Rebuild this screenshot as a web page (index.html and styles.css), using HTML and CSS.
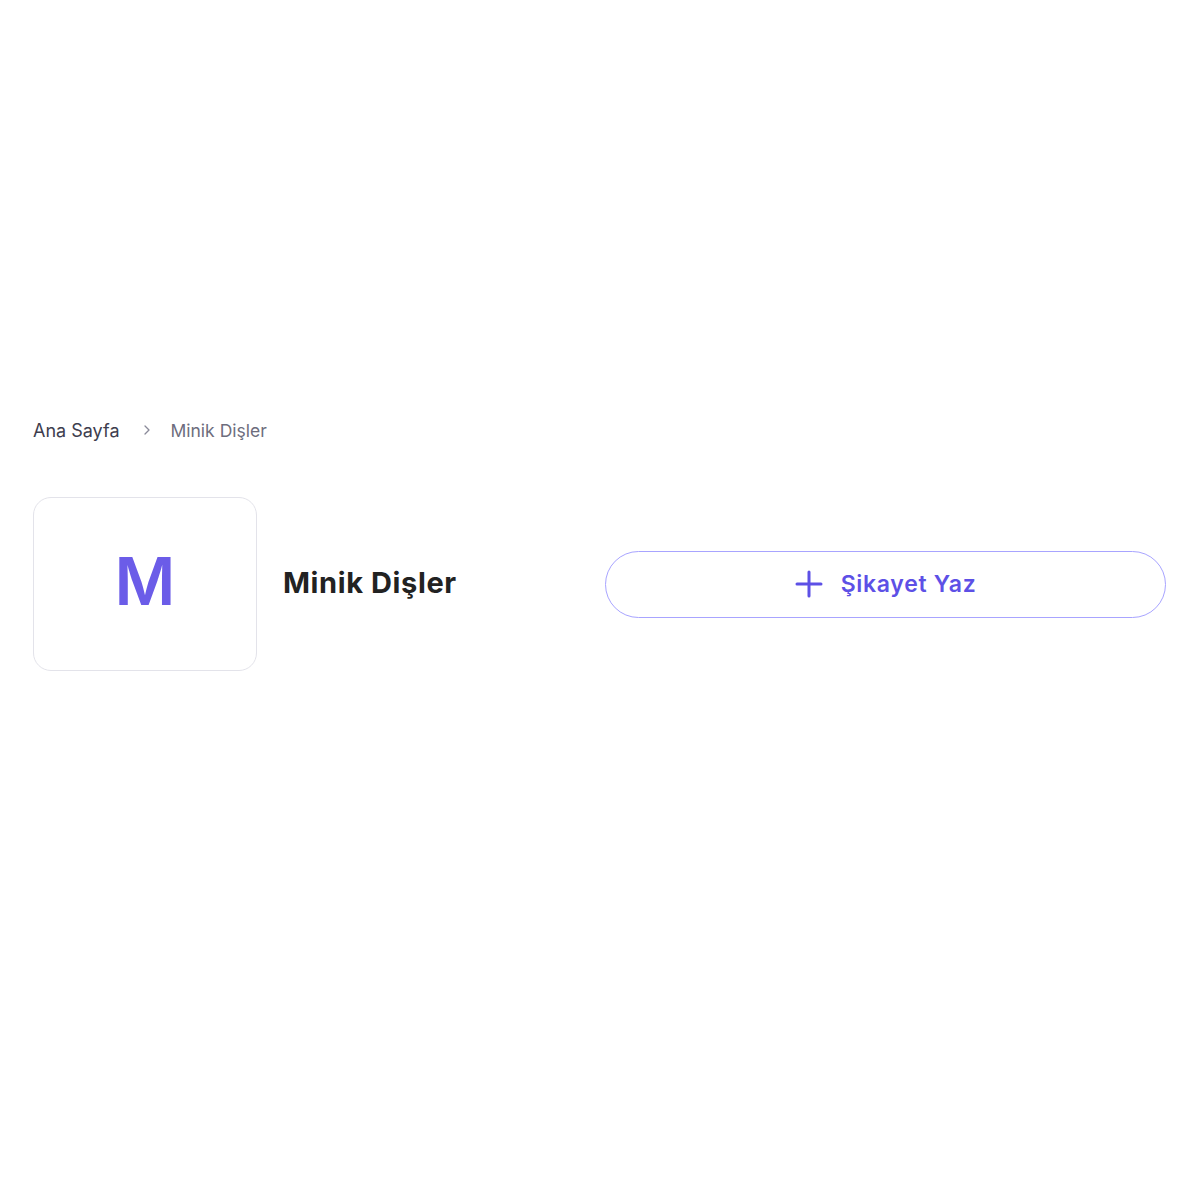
FILE: index.html
```html
<!DOCTYPE html>
<html lang="tr">
<head>
    <meta charset="UTF-8">
    <meta name="viewport" content="width=device-width, initial-scale=1.0">
    <title>Minik Dişler</title>
    <link rel="stylesheet" href="styles.css">
</head>
<body>
    <div class="page">
        <nav class="breadcrumb">
            <a href="#">Ana Sayfa</a>
            <svg class="sep" width="10" height="12" viewBox="0 0 10 12" fill="none">
                <path d="M3 2l4 4-4 4" stroke="currentColor" stroke-width="1.3" stroke-linecap="round" stroke-linejoin="round"/>
            </svg>
            <span class="current">Minik Dişler</span>
        </nav>

        <div class="brand-head">
            <div class="brand-info">
                <div class="logo-box">M</div>
                <h1>Minik Dişler</h1>
            </div>
            <button class="write-btn" type="button">
                <svg width="28" height="28" viewBox="0 0 28 28" fill="none">
                    <path d="M14 2v24M2 14h24" stroke="currentColor" stroke-width="3" stroke-linecap="round"/>
                </svg>
                Şikayet Yaz
            </button>
        </div>
    </div>
</body>
</html>
```

FILE: styles.css
```css
body {
    margin: 0;
    font-family: 'Inter', 'Lato', sans-serif;
    background: #fff;
    color: #222;
}
.page {
    padding: 418px 34px 0 33px;
}
.breadcrumb {
    display: flex;
    align-items: center;
    font-size: 18px;
    height: 24px;
}
.breadcrumb a {
    color: #3d3d4e;
    text-decoration: none;
}
.breadcrumb .sep {
    color: #8a8a99;
    margin: 0 18px 0 23px;
}
.breadcrumb .current {
    color: #6d6d7d;
    font-size: 17.5px;
}
.brand-head {
    display: flex;
    align-items: center;
    justify-content: space-between;
    margin-top: 55px;
}
.brand-info {
    display: flex;
    align-items: center;
    gap: 26px;
}
.logo-box {
    width: 224px;
    height: 174px;
    border: 1px solid #e3e3ea;
    border-radius: 18px;
    display: flex;
    align-items: center;
    justify-content: center;
    font-size: 66px;
    font-weight: 600;
    color: #6b5ce8;
    padding-bottom: 6px;
    box-sizing: border-box;
}
h1 {
    margin: 0 0 4px;
    font-size: 29px;
    font-weight: 700;
    letter-spacing: 0.6px;
    color: #222;
}
.write-btn {
    width: 561px;
    height: 67px;
    border: 1.5px solid #a8a4ff;
    border-radius: 34px;
    background: #fff;
    color: #5d50e6;
    font-family: inherit;
    font-size: 23px;
    font-weight: 600;
    letter-spacing: 0.7px;
    display: flex;
    align-items: center;
    justify-content: center;
    gap: 18px;
    cursor: pointer;
}
```
